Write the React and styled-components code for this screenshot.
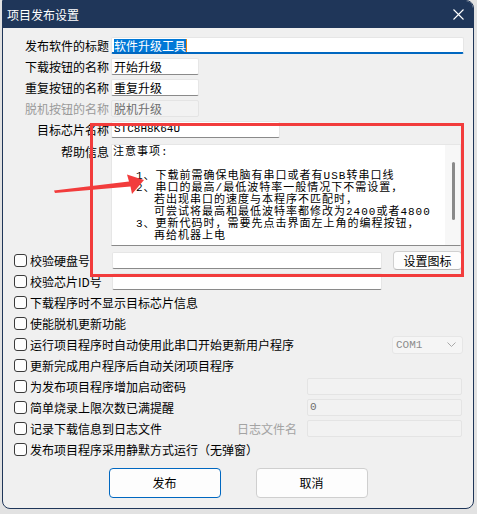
import React from "react";
import styled, { createGlobalStyle } from "styled-components";

const GlobalStyle = createGlobalStyle`
  html, body {
    margin: 0;
    padding: 0;
    background: #e2e2e2;
  }
  body {
    font-family: "Noto Sans CJK SC", "Noto Sans", sans-serif;
    font-size: 12px;
    color: #000;
  }
`;

const MONO = `"Liberation Mono", "Noto Sans CJK SC", monospace`;

const Page = styled.div`
  position: relative;
  width: 477px;
  height: 514px;
  overflow: hidden;
`;

const Window = styled.div`
  margin-left: 2px;
  width: 472px;
  height: 509px;
  box-sizing: border-box;
  border: 1px solid #1f3659;
  border-radius: 0 8px 8px 8px;
  background: #f0f0f0;
  display: flex;
  flex-direction: column;
  overflow: hidden;
`;

const TitleBar = styled.div`
  height: 27px;
  flex: none;
  background: #1f3659;
  color: #fff;
  display: flex;
  align-items: center;
  justify-content: space-between;
  padding: 0 9px 0 4px;
  line-height: 16px;
`;

const Content = styled.div`
  padding-top: 9px;
  display: flex;
  flex-direction: column;
`;

const FieldGrid = styled.div`
  display: grid;
  grid-template-columns: 106px auto;
  column-gap: 2px;
  row-gap: 4px;
  align-items: center;
  justify-items: start;
`;

const Label = styled.div`
  justify-self: end;
  align-self: ${(p) => (p.$top ? "start" : "center")};
  line-height: 16px;
  white-space: nowrap;
  color: ${(p) => (p.$disabled ? "#9a9a9a" : "#000")};
  margin-top: ${(p) => (p.$top ? "2px" : "0")};
`;

const Field = styled.div`
  box-sizing: border-box;
  height: 17px;
  width: ${(p) => p.$w}px;
  display: flex;
  align-items: center;
  padding: 0 2px;
  background: ${(p) => (p.$disabled ? "#f2f2f2" : "#fff")};
  border: 1px solid ${(p) => (p.$disabled ? "#e4e4e4" : "#e6e6e6")};
  border-bottom: ${(p) =>
    p.$focused
      ? "2px solid #0067c0"
      : p.$disabled
      ? "1px solid #e4e4e4"
      : "1px solid #8a8a8a"};
  border-radius: 2px;
  color: ${(p) => (p.$disabled ? "#6f6f6f" : "#000")};
  font-family: ${(p) => (p.$mono ? MONO : "inherit")};
  font-size: ${(p) => (p.$mono ? "11px" : "12px")};
  line-height: 15px;
  white-space: nowrap;
  overflow: hidden;
`;

const Selected = styled.span`
  background: #0078d7;
  color: #fff;
  line-height: 13px;
`;

const Caret = styled.span`
  width: 1px;
  height: 13px;
  background: #e8860f;
`;

const HelpBox = styled.div`
  margin-top: 2px;
  box-sizing: border-box;
  width: 350px;
  height: 102px;
  display: flex;
  background: #fff;
  border: 1px solid #e6e6e6;
  border-bottom-color: #8a8a8a;
`;

const HelpText = styled.div`
  flex: 1;
  padding: 1px 0 0 1px;
  font-family: ${MONO};
  font-size: 11px;
  letter-spacing: 1px;
  line-height: 12px;
  overflow: hidden;
`;

const HelpLine = styled.div`
  height: 12px;
  padding-left: ${(p) => p.$indent || 0}px;
  white-space: nowrap;
`;

const ScrollTrack = styled.div`
  width: 15px;
  flex: none;
  background: #f7f7f7;
  padding: 17px 0 0 7px;
  box-sizing: border-box;
`;

const ScrollThumb = styled.div`
  width: 3px;
  height: 58px;
  border-radius: 2px;
  background: #8a8a8a;
`;

const CheckList = styled.div`
  margin-top: 4px;
  display: flex;
  flex-direction: column;
`;

const CheckRow = styled.div`
  height: 21px;
  display: flex;
  align-items: center;
  padding: 0 11px;
`;

const CheckLabel = styled.label`
  display: flex;
  align-items: center;
  gap: 3px;
  flex: none;
  width: ${(p) => (p.$w ? `${p.$w}px` : "auto")};
  line-height: 16px;
  white-space: nowrap;
`;

const Box = styled.span`
  width: 13px;
  height: 13px;
  box-sizing: border-box;
  border: 1px solid #3a3a3a;
  border-radius: 3px;
  background: #fdfdfd;
  flex: none;
`;

const RightGroup = styled.div`
  margin-left: auto;
  display: flex;
  align-items: center;
  gap: 10px;
`;

const SubLabel = styled.span`
  color: #a3a3a3;
  line-height: 16px;
`;

const SmallButton = styled.div`
  margin-left: 11px;
  width: 69px;
  height: 19px;
  box-sizing: border-box;
  border: 1px solid #d0d0d0;
  border-bottom-color: #b8b8b8;
  border-radius: 4px;
  background: #fdfdfd;
  display: flex;
  align-items: center;
  justify-content: center;
  line-height: 16px;
`;

const Combo = styled.div`
  margin-left: auto;
  margin-right: -1px;
  width: 71px;
  height: 18px;
  box-sizing: border-box;
  border: 1px solid #e6e6e6;
  border-radius: 3px;
  background: #f5f5f5;
  display: flex;
  align-items: center;
  justify-content: space-between;
  padding: 0 6px 0 3px;
  font-family: ${MONO};
  font-size: 11px;
  color: #8c8c8c;
`;

const ButtonRow = styled.div`
  margin-top: 8px;
  display: flex;
  justify-content: center;
  gap: 35px;
`;

const DialogButton = styled.div`
  width: 112px;
  height: 30px;
  box-sizing: border-box;
  border: 1px solid ${(p) => (p.$primary ? "#0067c0" : "#cfcfcf")};
  border-radius: 4px;
  background: #fdfdfd;
  display: flex;
  align-items: center;
  justify-content: center;
  line-height: 16px;
`;

const Highlight = styled.div`
  position: absolute;
  left: 90px;
  top: 123px;
  width: 374px;
  height: 154px;
  box-sizing: border-box;
  border: 3px solid #f23c3c;
  pointer-events: none;
`;

const Overlay = styled.svg`
  position: absolute;
  left: 0;
  top: 0;
  pointer-events: none;
`;

const CloseIcon = () => (
  <svg width="11" height="11" viewBox="0 0 11 11">
    <path d="M0.5 0.5 L10.5 10.5 M10.5 0.5 L0.5 10.5" stroke="#fff" strokeWidth="1.1" />
  </svg>
);

const Chevron = () => (
  <svg width="9" height="5" viewBox="0 0 9 5">
    <path d="M0.5 0.5 L4.5 4.5 L8.5 0.5" fill="none" stroke="#a8a8a8" strokeWidth="1" />
  </svg>
);

const helpLines = [
  { t: "注意事项:", i: 0 },
  { t: "", i: 0 },
  { t: "1、下载前需确保电脑有串口或者有USB转串口线", i: 23 },
  { t: "2、串口的最高/最低波特率一般情况下不需设置，", i: 23 },
  { t: "若出现串口的速度与本程序不匹配时，", i: 41 },
  { t: "可尝试将最高和最低波特率都修改为2400或者4800", i: 41 },
  { t: "3、更新代码时，需要先点击界面左上角的编程按钮，", i: 23 },
  { t: "再给机器上电", i: 41 },
];

const Check = ({ children, w }) => (
  <CheckLabel $w={w}>
    <Box />
    {children}
  </CheckLabel>
);

export default function App() {
  return (
    <Page>
      <GlobalStyle />
      <Window>
        <TitleBar>
          <span>项目发布设置</span>
          <CloseIcon />
        </TitleBar>
        <Content>
          <FieldGrid>
            <Label>发布软件的标题</Label>
            <Field $w={353} $focused>
              <Selected>软件升级工具</Selected>
              <Caret />
            </Field>
            <Label>下载按钮的名称</Label>
            <Field $w={88}>开始升级</Field>
            <Label>重复按钮的名称</Label>
            <Field $w={88}>重复升级</Field>
            <Label $disabled>脱机按钮的名称</Label>
            <Field $w={88} $disabled>脱机升级</Field>
            <Label>目标芯片名称</Label>
            <Field $w={169} $mono>STC8H8K64U</Field>
            <Label $top>帮助信息</Label>
            <HelpBox>
              <HelpText>
                {helpLines.map((l, n) => (
                  <HelpLine key={n} $indent={l.i}>
                    {l.t}
                  </HelpLine>
                ))}
              </HelpText>
              <ScrollTrack>
                <ScrollThumb />
              </ScrollTrack>
            </HelpBox>
          </FieldGrid>

          <CheckList>
            <CheckRow>
              <Check w={98}>校验硬盘号</Check>
              <Field $w={270} />
              <SmallButton>设置图标</SmallButton>
            </CheckRow>
            <CheckRow>
              <Check w={98}>校验芯片ID号</Check>
              <Field $w={270} />
            </CheckRow>
            <CheckRow>
              <Check>下载程序时不显示目标芯片信息</Check>
            </CheckRow>
            <CheckRow>
              <Check>使能脱机更新功能</Check>
            </CheckRow>
            <CheckRow>
              <Check>运行项目程序时自动使用此串口开始更新用户程序</Check>
              <Combo>
                <span>COM1</span>
                <Chevron />
              </Combo>
            </CheckRow>
            <CheckRow>
              <Check>更新完成用户程序后自动关闭项目程序</Check>
            </CheckRow>
            <CheckRow>
              <Check>为发布项目程序增加启动密码</Check>
              <RightGroup>
                <Field $w={155} $disabled />
              </RightGroup>
            </CheckRow>
            <CheckRow>
              <Check>简单烧录上限次数已满提醒</Check>
              <RightGroup>
                <Field $w={155} $disabled $mono>0</Field>
              </RightGroup>
            </CheckRow>
            <CheckRow>
              <Check>记录下载信息到日志文件</Check>
              <RightGroup>
                <SubLabel>日志文件名</SubLabel>
                <Field $w={155} $disabled />
              </RightGroup>
            </CheckRow>
            <CheckRow>
              <Check>发布项目程序采用静默方式运行（无弹窗）</Check>
            </CheckRow>
          </CheckList>

          <ButtonRow>
            <DialogButton $primary>发布</DialogButton>
            <DialogButton>取消</DialogButton>
          </ButtonRow>
        </Content>
      </Window>

      <Highlight />
      <Overlay width="477" height="514" viewBox="0 0 477 514">
        <path
          d="M54 190.5 L129 181.5 L127 174.5 L144 180 L132 194 L130.5 186.5 L55 193 Z"
          fill="#f23c3c"
        />
      </Overlay>
    </Page>
  );
}
